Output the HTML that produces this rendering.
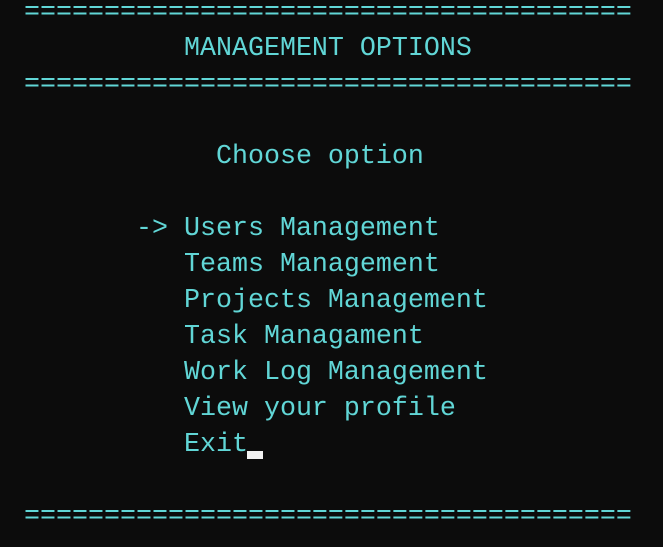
<!DOCTYPE html>
<html><head><style>
html,body{margin:0;padding:0;background:#0c0c0c;width:663px;height:547px;overflow:hidden}
pre{margin:0;position:absolute;left:24px;top:-5px;font-family:"Liberation Mono",monospace;font-size:26.67px;line-height:36px;color:#61d6d6;}
.c{position:absolute;left:247px;top:451px;width:16px;height:8px;background:#f2f2f2}
</style></head><body>
<pre>======================================
          MANAGEMENT OPTIONS
======================================

            Choose option

       -> Users Management
          Teams Management
          Projects Management
          Task Managament
          Work Log Management
          View your profile
          Exit

======================================</pre>
<div class="c"></div>
</body></html>
